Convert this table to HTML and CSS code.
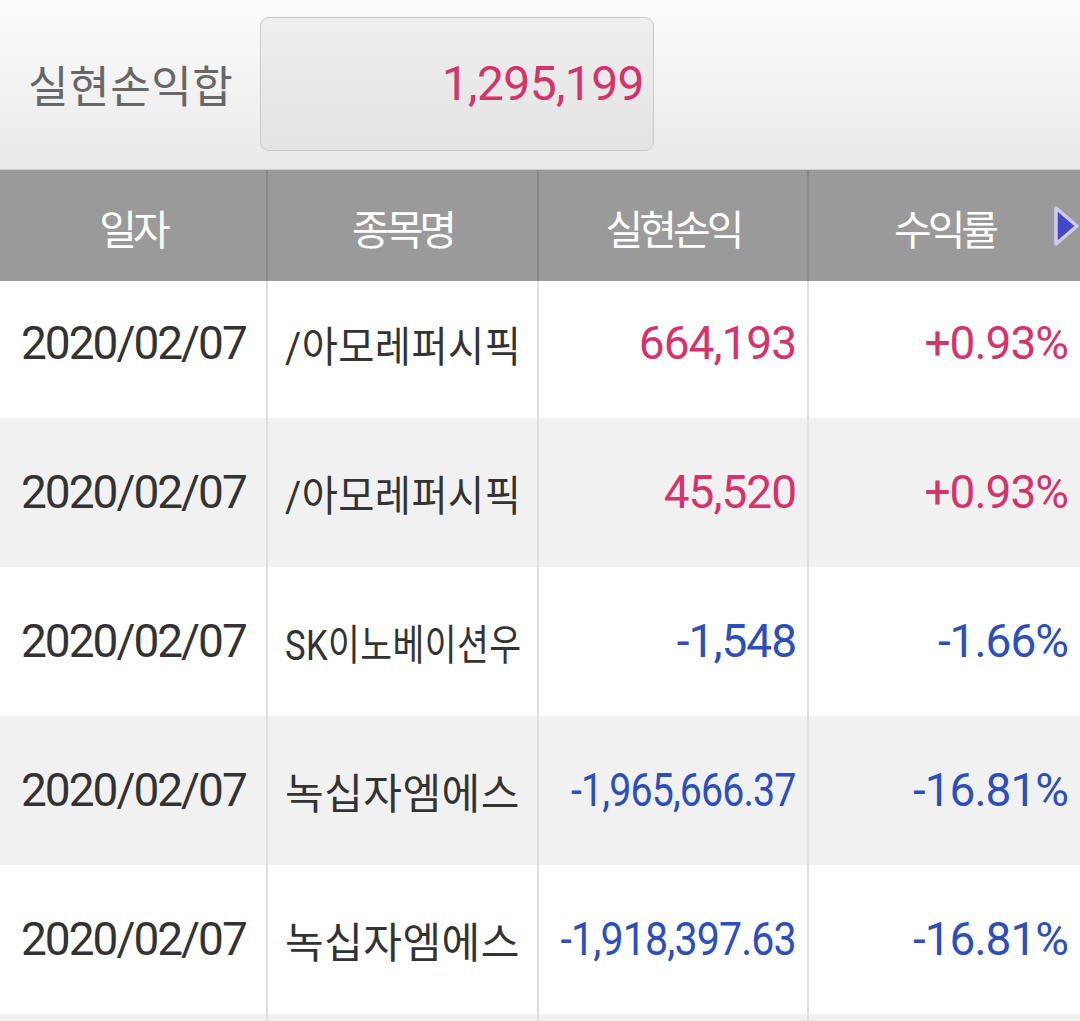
FILE: index.html
```html
<!DOCTYPE html>
<html lang="ko">
<head>
<meta charset="utf-8">
<link rel="stylesheet" href="styles.css">
</head>
<body>
<div class="screen">
  <div class="summary">
    <div class="summary-label">실현손익합</div>
    <div class="summary-box"><span class="pos">1,295,199</span></div>
  </div>
  <div class="thead">
    <div class="th">일자</div>
    <div class="th">종목명</div>
    <div class="th">실현손익</div>
    <div class="th th-last">수익률
      <svg class="arrow" width="28" height="44" viewBox="0 0 28 44"><path d="M4 4 L25 22 L4 40 Z" fill="#4447c6" stroke="#cdcde8" stroke-width="3.5" stroke-linejoin="round"/></svg>
    </div>
  </div>
  <div class="tbody">
    <div class="rows">
      <div class="row">
        <div class="td date">2020/02/07</div>
        <div class="td name"><span class="fit fit-a">/아모레퍼시픽</span></div>
        <div class="td num pos">664,193</div>
        <div class="td num pos">+0.93%</div>
      </div>
      <div class="row alt">
        <div class="td date">2020/02/07</div>
        <div class="td name"><span class="fit fit-a">/아모레퍼시픽</span></div>
        <div class="td num pos">45,520</div>
        <div class="td num pos">+0.93%</div>
      </div>
      <div class="row">
        <div class="td date">2020/02/07</div>
        <div class="td name"><span class="fit fit-b">SK이노베이션우</span></div>
        <div class="td num neg">-1,548</div>
        <div class="td num neg">-1.66%</div>
      </div>
      <div class="row alt">
        <div class="td date">2020/02/07</div>
        <div class="td name"><span class="fit">녹십자엠에스</span></div>
        <div class="td num neg"><span class="fitn fitn-a">-1,965,666.37</span></div>
        <div class="td num neg">-16.81%</div>
      </div>
      <div class="row">
        <div class="td date">2020/02/07</div>
        <div class="td name"><span class="fit">녹십자엠에스</span></div>
        <div class="td num neg"><span class="fitn fitn-b">-1,918,397.63</span></div>
        <div class="td num neg">-16.81%</div>
      </div>
      <div class="row alt">
        <div class="td date"></div>
        <div class="td name"></div>
        <div class="td num"></div>
        <div class="td num"></div>
      </div>
    </div>
  </div>
</div>
</body>
</html>
```
FILE: styles.css
```css
* { box-sizing: border-box; }
html, body { margin: 0; padding: 0; background: #fff; }
body { font-family: Roboto, "Noto Sans CJK KR", sans-serif; }
.screen { width: 1080px; height: 1021px; overflow: hidden; }

.summary {
  height: 170px;
  display: flex;
  align-items: flex-start;
  background: linear-gradient(#fcfcfc, #e9e9e9);
  border-bottom: 1px solid #cfcfcf;
}
.summary-label {
  width: 260px;
  padding-left: 28px;
  padding-top: 54px;
  font-family: "Noto Sans CJK KR", sans-serif;
  font-size: 44px;
  line-height: 60px;
  color: #676767;
  letter-spacing: 0.6px;
  white-space: nowrap;
}
.summary-box {
  margin-top: 17px;
  width: 394px;
  height: 134px;
  border: 1px solid #c9c9c9;
  border-radius: 9px;
  background: linear-gradient(#efefef, #e3e3e3);
  display: flex;
  align-items: center;
  justify-content: flex-end;
  padding-right: 9px;
  font-size: 48px;
  letter-spacing: -0.6px;
  padding-bottom: 2px;
}

.pos { color: #d4336c; }
.neg { color: #2c4fba; }

.thead {
  height: 111px;
  display: grid;
  grid-template-columns: 268px 271px 270px 271px;
  background: #9a9a9a;
}
.th {
  display: flex;
  align-items: center;
  justify-content: center;
  color: #fff;
  font-family: "Noto Sans CJK KR", sans-serif;
  font-size: 41px;
  letter-spacing: -4px;
  border-right: 2px solid #888;
  padding-top: 2px;
}
.th-last { border-right: none; position: relative; }
.arrow { position: absolute; right: 0; top: 34px; }

.tbody { height: 740px; overflow: hidden; }
.rows { margin-top: -12px; }
.row {
  height: 149px;
  display: grid;
  grid-template-columns: 268px 271px 270px 271px;
  background: #fff;
}
.row.alt { background: #f1f1f1; }
.td {
  display: flex;
  align-items: center;
  border-right: 2px solid #dedede;
  color: #333;
  padding-bottom: 1px;
}
.td.pos { color: #d4336c; }
.td.neg { color: #2c4fba; }
.td:last-child { border-right: none; }
.date {
  padding-left: 21px;
  font-size: 46px;
  letter-spacing: -2px;
}
.name {
  padding-left: 17px;
  font-size: 42px;
  white-space: nowrap;
}
.fit {
  display: inline-block;
  letter-spacing: 0.5px;
  transform-origin: left center;
}
.fit-a { transform: scaleX(0.935); }
.fit-b { transform: scaleX(0.824); }
.num {
  justify-content: flex-end;
  padding-right: 11px;
  font-size: 46px;
  letter-spacing: -1px;
}
.fitn {
  display: inline-block;
  transform-origin: right center;
}
.fitn-a { transform: scaleX(0.855); }
.fitn-b { transform: scaleX(0.895); }
.td.num:last-child { padding-right: 12px; }
```
